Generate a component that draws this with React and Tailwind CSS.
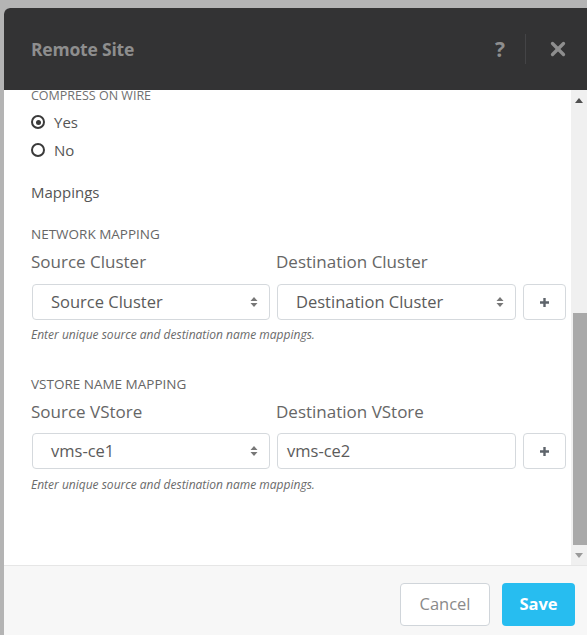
import { X } from 'lucide-react'

function UpDown() {
  return (
    <svg width="8" height="12" viewBox="0 0 8 12" className="text-[#777]">
      <path d="M4 1 L7.5 5 H0.5 Z" fill="currentColor" />
      <path d="M4 11 L7.5 7 H0.5 Z" fill="currentColor" />
    </svg>
  )
}

function SelectBox({ value, width }) {
  return (
    <div className={`${width} h-[36px] flex items-center justify-between border border-[#d5d9dd] rounded-[4px] bg-white pl-[18px] pr-[11px]`}>
      <span className="text-[16.5px] text-[#5b5b5b]">{value}</span>
      <UpDown />
    </div>
  )
}

function PlusButton() {
  return (
    <div className="w-[43px] h-[36px] flex items-center justify-center border border-[#d5d9dd] rounded-[4px] bg-white">
      <svg width="11" height="11" viewBox="0 0 11 11">
        <path d="M5.5 1 V10 M1 5.5 H10" stroke="#5e646b" strokeWidth="2.4" />
      </svg>
    </div>
  )
}

function Radio({ checked, label }) {
  return (
    <div className="h-[20px] flex items-center">
      <div className="w-[14px] h-[14px] rounded-full border-[2.5px] border-[#3a3a3a] flex items-center justify-center">
        {checked && <div className="w-[5px] h-[5px] rounded-full bg-[#3a3a3a]" />}
      </div>
      <span className="ml-[9px] text-[15px] text-[#555]">{label}</span>
    </div>
  )
}

export default function App() {
  return (
    <div className="w-[587px] h-[635px] bg-[#b4b4b4] pt-[8px] pl-[4px] overflow-hidden" style={{ fontFamily: '"Open Sans", "Liberation Sans", sans-serif' }}>
      <div className="w-[583px] h-[627px] flex flex-col rounded-tl-[6px] overflow-hidden bg-white">
        {/* Header */}
        <div className="h-[82px] bg-[#333334] flex items-center pl-[27px] shrink-0">
          <h1 className="text-[17.5px] font-bold text-[#8e8e8e] tracking-[-0.2px]">Remote Site</h1>
          <div className="ml-auto flex items-center h-full">
            <span className="text-[21px] font-bold text-[#8e8e8e] leading-none">?</span>
            <div className="w-px h-[30px] bg-[#444446] ml-[20px]" />
            <X className="ml-[21px] mr-[18px] text-[#8e8e8e]" size={22} strokeWidth={3.6} />
          </div>
        </div>

        {/* Body */}
        <div className="h-[475px] flex shrink-0">
          <div className="flex-1 overflow-hidden pl-[27px]">
            <div className="-mt-[2px] h-[16px] leading-[16px] text-[12.5px] text-[#707070] uppercase">Compress on wire</div>
            <div className="mt-[8px]">
              <Radio checked label="Yes" />
            </div>
            <div className="mt-[8px]">
              <Radio label="No" />
            </div>
            <div className="mt-[22px] h-[20px] leading-[20px] text-[15px] text-[#555]">Mappings</div>

            <div className="mt-[24px] h-[16px] leading-[16px] text-[13.5px] text-[#666] uppercase">Network mapping</div>
            <div className="mt-[10px] flex h-[20px] leading-[20px] text-[17px] text-[#666]">
              <span className="w-[245px]">Source Cluster</span>
              <span>Destination Cluster</span>
            </div>
            <div className="mt-[12px] flex gap-[7px] pl-px">
              <SelectBox value="Source Cluster" width="w-[238px]" />
              <SelectBox value="Destination Cluster" width="w-[239px]" />
              <PlusButton />
            </div>
            <div className="mt-[8px] h-[14px] leading-[14px] text-[12px] italic text-[#6a6a6a]">Enter unique source and destination name mappings.</div>

            <div className="mt-[34px] h-[16px] leading-[16px] text-[13.5px] text-[#666] uppercase">Vstore name mapping</div>
            <div className="mt-[10px] flex h-[20px] leading-[20px] text-[17px] text-[#666]">
              <span className="w-[245px]">Source VStore</span>
              <span>Destination VStore</span>
            </div>
            <div className="mt-[11px] flex gap-[7px] pl-px">
              <SelectBox value="vms-ce1" width="w-[238px]" />
              <div className="w-[239px] h-[36px] flex items-center border border-[#d5d9dd] rounded-[4px] bg-white pl-[9px]">
                <span className="text-[16.5px] text-[#5b5b5b]">vms-ce2</span>
              </div>
              <PlusButton />
            </div>
            <div className="mt-[9px] h-[14px] leading-[14px] text-[12px] italic text-[#6a6a6a]">Enter unique source and destination name mappings.</div>
          </div>

          {/* Scrollbar */}
          <div className="w-[16px] bg-[#f0f0f0] flex flex-col items-center shrink-0">
            <div className="h-[20px] flex items-center justify-center">
              <div className="w-0 h-0 border-l-[4px] border-r-[4px] border-b-[5px] border-l-transparent border-r-transparent border-b-[#505050]" />
            </div>
            <div className="h-[203px]" />
            <div className="w-[14px] ml-[2px] h-[232px] bg-[#a9a9a9]" />
            <div className="h-[20px] flex items-center justify-center">
              <div className="w-0 h-0 border-l-[4px] border-r-[4px] border-t-[5px] border-l-transparent border-r-transparent border-t-[#9a9a9a]" />
            </div>
          </div>
        </div>

        {/* Footer */}
        <div className="flex-1 bg-[#f7f7f7] border-t border-[#e6e6e6] flex items-start justify-end gap-[12px] pr-[12px] pt-[17px]">
          <button className="w-[90px] h-[43px] bg-white border border-[#d0d5da] rounded-[4px] text-[16.5px] text-[#8a8a8a]">Cancel</button>
          <button className="w-[73px] h-[43px] bg-[#27bdf0] rounded-[4px] text-[16.5px] font-bold text-white">Save</button>
        </div>
      </div>
    </div>
  )
}
